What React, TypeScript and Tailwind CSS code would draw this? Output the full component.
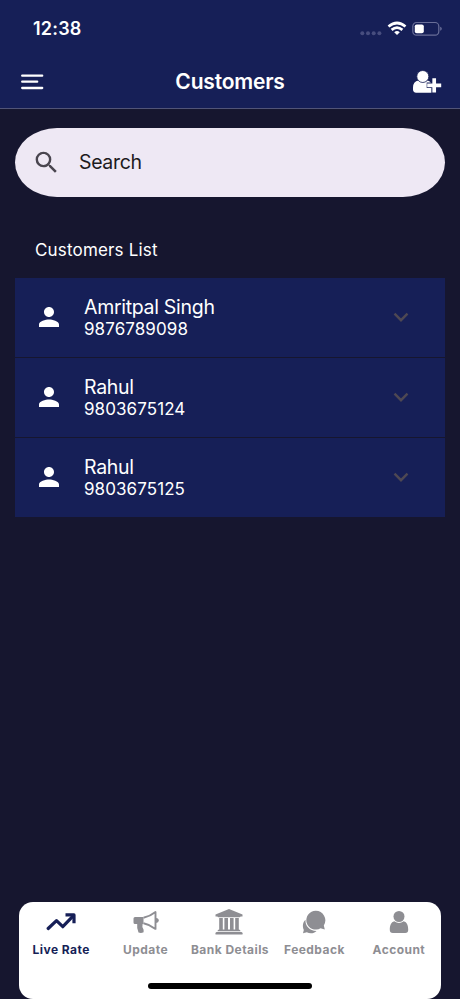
import type { ReactNode } from "react";
import { MdPerson, MdSearch } from "react-icons/md";

type Customer = { name: string; phone: string };

const customers: Customer[] = [
  { name: "Amritpal Singh", phone: "9876789098" },
  { name: "Rahul", phone: "9803675124" },
  { name: "Rahul", phone: "9803675125" },
];

function StatusBar() {
  return (
    <div className="flex h-[58px] items-center justify-between pl-[33px] pr-[18px]">
      <span className="text-[18px] font-semibold leading-none tracking-[0.2px]">12:38</span>
      <svg width="82" height="16" viewBox="0 0 82 16" fill="none">
        <g fill="#474d7e">
          <circle cx="2.3" cy="12.2" r="2" />
          <circle cx="8" cy="12.2" r="2" />
          <circle cx="13.7" cy="12.2" r="2" />
          <circle cx="19.4" cy="12.2" r="2" />
        </g>
        <g stroke="#fff" strokeWidth="2.700">
          <path d="M28.500 5.500Q37 -1.500 45.500 5.500" />
          <path d="M31.600 8.900Q37 4.300 42.400 8.900" />
        </g>
        <path d="M34.200 11.200Q37 8.900 39.800 11.200L37 14.100Z" fill="#fff" />
        <rect x="52.800" y="1.500" width="26" height="12.600" rx="3.700" stroke="#696e98" strokeWidth="1.200" />
        <rect x="54.800" y="3.400" width="9" height="8.800" rx="1.900" fill="#fff" />
        <path d="M80.200 5.800Q81.800 6.300 81.800 7.800T80.200 9.800Z" fill="#696e98" />
      </svg>
    </div>
  );
}

function Header() {
  return (
    <header className="h-[109px] border-b border-[#515477] bg-[#161f57]">
      <StatusBar />
      <div className="flex h-[47px] items-center justify-between pl-[21px] pr-[18px]">
        <svg width="28" height="20" viewBox="0 0 28 20" stroke="#fff" strokeWidth="2.300" strokeLinecap="round">
          <path d="M1.200 3.700H21.200M1.200 9.700H16.200M1.200 16H21.200" />
        </svg>
        <h1 className="-ml-[2px] text-[21px] font-semibold leading-none tracking-[-0.200px]">Customers</h1>
        <svg width="29" height="24" viewBox="0 0 29 24" fill="#fff">
          <path d="M5.500 10.500Q9.600 14 14.300 10.500Q18 11 18.800 15.500V22.800H3.200Q0 22.600 0 19.500V17.500Q0 11.500 5.500 10.500Z" />
          <circle cx="9.800" cy="6.500" r="6" stroke="#161f57" strokeWidth="0.800" />
          <path d="M21.200 7.700V23.500M13.700 15.300H28.700" stroke="#161f57" strokeWidth="5.500" />
          <path d="M21.200 8.300V22.500M14.200 15.300H28.200" stroke="#fff" strokeWidth="3.700" />
        </svg>
      </div>
    </header>
  );
}

function CustomerRow({ name, phone }: Customer) {
  return (
    <li className="flex h-[78.500px] items-center bg-[#161f57] pl-[19px] pr-[32px]">
      <MdPerson className="size-[30px] shrink-0" />
      <div className="ml-[20px] flex-1">
        <div className="text-[19.500px] leading-[24px] tracking-[-0.300px]">{name}</div>
        <div className="text-[17px] leading-[20px] tracking-[0.080px]">{phone}</div>
      </div>
      <svg width="24" height="24" viewBox="0 0 24 24" fill="none" stroke="#4e4853" strokeWidth="2.400">
        <path d="M5.500 8.700L12 15.200L18.500 8.700" />
      </svg>
    </li>
  );
}

function TabItem({ label, active, children }: { label: string; active?: boolean; children: ReactNode }) {
  return (
    <div className={`flex min-w-0 flex-1 flex-col items-center ${active ? "text-[#161f57]" : "text-[#8e8e93]"}`}>
      <div className="flex h-[28px] items-center">{children}</div>
      <span className="mt-[6px] whitespace-nowrap text-[12px] font-bold leading-[16px] tracking-[0.450px]">{label}</span>
    </div>
  );
}

function TabBar() {
  return (
    <nav className="mx-[19px] flex h-[97.500px] shrink-0 flex-col items-center justify-between rounded-[14px] bg-white pt-[6.500px] pb-[10px]">
      <div className="flex w-full">
        <TabItem label="Live Rate" active>
          <svg width="30" height="24" viewBox="0 0 30 24" fill="none" stroke="currentColor" strokeWidth="3.200" strokeLinecap="round" strokeLinejoin="round">
            <path d="M2.200 18.500L10.500 10.700L16.800 16.700L26.500 6.700" />
            <path d="M19.500 4.900H28V13.200" strokeLinecap="butt" />
          </svg>
        </TabItem>
        <TabItem label="Update">
          <svg width="26" height="24" viewBox="0 0 26 24" fill="currentColor">
            <path d="M2 7H10.500V14H9.600Q8.700 16.500 10.600 19.800V22.300Q8 23.500 5.500 22.500Q3.600 18 4.200 14H2Q.5 14 .5 12.500V8.500Q.5 7 2 7Z" />
            <path d="M10.500 7.800Q17 6.500 22.500 2.100V18.900Q17 14.500 10.500 13.200" fill="none" stroke="currentColor" strokeWidth="1.900" strokeLinejoin="round" />
            <path d="M23 8Q25.800 8.300 25.800 10.500T23 13Z" />
          </svg>
        </TabItem>
        <TabItem label="Bank Details">
          <svg width="28" height="26" viewBox="0 0 28 26" fill="currentColor" className="-ml-[2px]">
            <path d="M14 0L27.500 5.500V7.500H25.500Q25.500 8.300 24.500 8.300H3.500Q2.500 8.300 2.500 7.500H.5V5.500Z" />
            <path d="M4.200 9H7.800V20.500H9.400V9H13V20.500H15V9H18.600V20.500H20.200V9H23.800V20.500Q25.500 20.700 25.500 22.300H2.500Q2.500 20.700 4.200 20.500Z" />
            <path d="M2 23H26Q27.500 23 27.500 24.300V25.500H.5V24.300Q.5 23 2 23Z" />
          </svg>
        </TabItem>
        <TabItem label="Feedback">
          <svg width="24" height="24" viewBox="0 0 24 24" fill="currentColor">
            <path d="M3.500 9.700C.8 12 .2 16 1.800 20L1 23.200L4.800 22.200C8 24 12 23.500 14.500 21C7.500 20.500 3 16 3.500 9.700Z" />
            <path d="M13.700 .8A9.400 9.400 0 1 0 18.500 18.300L22.800 19.500L21.800 15.400A9.500 9.500 0 0 0 13.700 .8Z" />
          </svg>
        </TabItem>
        <TabItem label="Account">
          <svg width="20" height="24" viewBox="0 0 20 24" fill="currentColor">
            <circle cx="10" cy="6.500" r="5.500" />
            <path d="M5.300 11.300Q10 14.500 14.700 11.300C18 12 19.200 15.500 19.200 20Q19.200 22.900 16.200 22.900H3.800Q.8 22.900 .8 20C.8 15.500 2 12 5.300 11.300Z" />
          </svg>
        </TabItem>
      </div>
      <div className="h-[6px] w-[164px] rounded-full bg-black" />
    </nav>
  );
}

export default function App() {
  return (
    <div className="flex h-[999px] w-[460px] flex-col overflow-hidden bg-[#16162f] font-['Inter',sans-serif] text-white">
      <Header />
      <main className="flex flex-1 flex-col px-[15px] pt-[19px]">
        <div className="flex h-[69px] items-center rounded-[42px/34.5px] bg-[#eee8f4] pl-[17px]">
          <MdSearch className="size-[29px] text-[#49454f]" />
          <span className="ml-[18px] text-[19.500px] leading-none tracking-[-0.350px] text-[#1d1b20]">Search</span>
        </div>
        <h2 className="mt-[41px] ml-[20px] text-[17px] font-normal leading-[24px] tracking-[0.170px]">Customers List</h2>
        <ul className="mt-[16px] flex flex-col gap-[1.500px]">
          {customers.map((customer) => (
            <CustomerRow key={customer.phone} {...customer} />
          ))}
        </ul>
      </main>
      <TabBar />
    </div>
  );
}
